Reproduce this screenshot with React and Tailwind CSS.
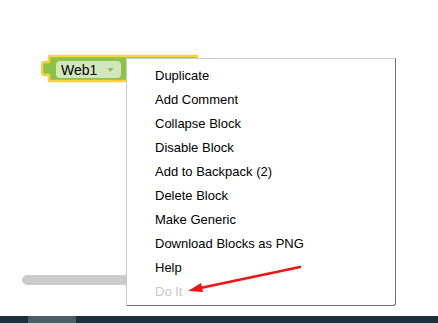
import React from "react";

const items = [
  "Duplicate",
  "Add Comment",
  "Collapse Block",
  "Disable Block",
  "Add to Backpack (2)",
  "Delete Block",
  "Make Generic",
  "Download Blocks as PNG",
  "Help",
];

export default function App() {
  return (
    <div
      className="relative w-[438px] h-[323px] bg-white overflow-hidden flex flex-col"
      style={{ fontFamily: '"Liberation Sans", Arial, sans-serif' }}
    >
      <div className="relative flex-1">
        {/* scrollbar */}
        <div className="absolute left-[22px] top-[275px] w-[160px] h-[10px] rounded-full bg-[#cccccc]" />

        {/* block */}
        <svg className="absolute left-0 top-0" width="220" height="100" viewBox="0 0 220 100">
          <path
            d="M49,56 H197 V81 H49 V75 C45,75 42,76 42,72 V65 C42,61 45,62 49,62 Z"
            fill="#8bc34a"
            stroke="#fbd13d"
            strokeWidth="2.5"
            strokeLinejoin="round"
          />
        </svg>
        <div className="absolute left-[56px] top-[61px] w-[65px] h-[17px] rounded-[4px] bg-[#d3e7bd] flex items-center pl-[5px]">
          <span className="text-[14px] leading-none text-black">Web1</span>
          <svg className="ml-[10px]" width="7" height="6" viewBox="0 0 7 6">
            <path d="M0.5,1 H6.5 L3.5,5 Z" fill="#8bc34a" />
          </svg>
        </div>

        {/* context menu */}
        <div className="absolute left-[126px] top-[58px] w-[270px] h-[248px] bg-white border border-[#cccccc] border-r-[#707070] border-b-[#707070] rounded-br-[3px] pt-[5px] pb-[3px]">
          {items.map((t) => (
            <div key={t} className="h-[24px] flex items-center pl-[28px] text-[13px] text-black">
              {t}
            </div>
          ))}
          <div className="h-[24px] flex items-center pl-[28px] text-[13px] text-[#c8c8c8]">Do It</div>
        </div>

        {/* red arrow */}
        <svg className="absolute left-0 top-0 pointer-events-none" width="438" height="316" viewBox="0 0 438 316">
          <line x1="300" y1="267" x2="198" y2="288.5" stroke="#f01414" strokeWidth="2.5" strokeLinecap="round" />
          <path d="M188,291 L201,283 L203,292 Z" fill="#f01414" />
        </svg>
      </div>

      {/* bottom bar */}
      <div className="h-[7px] flex bg-[#1f303d]">
        <div className="w-[28px]" />
        <div className="w-[48px] bg-[#4b5d67]" />
      </div>
    </div>
  );
}
